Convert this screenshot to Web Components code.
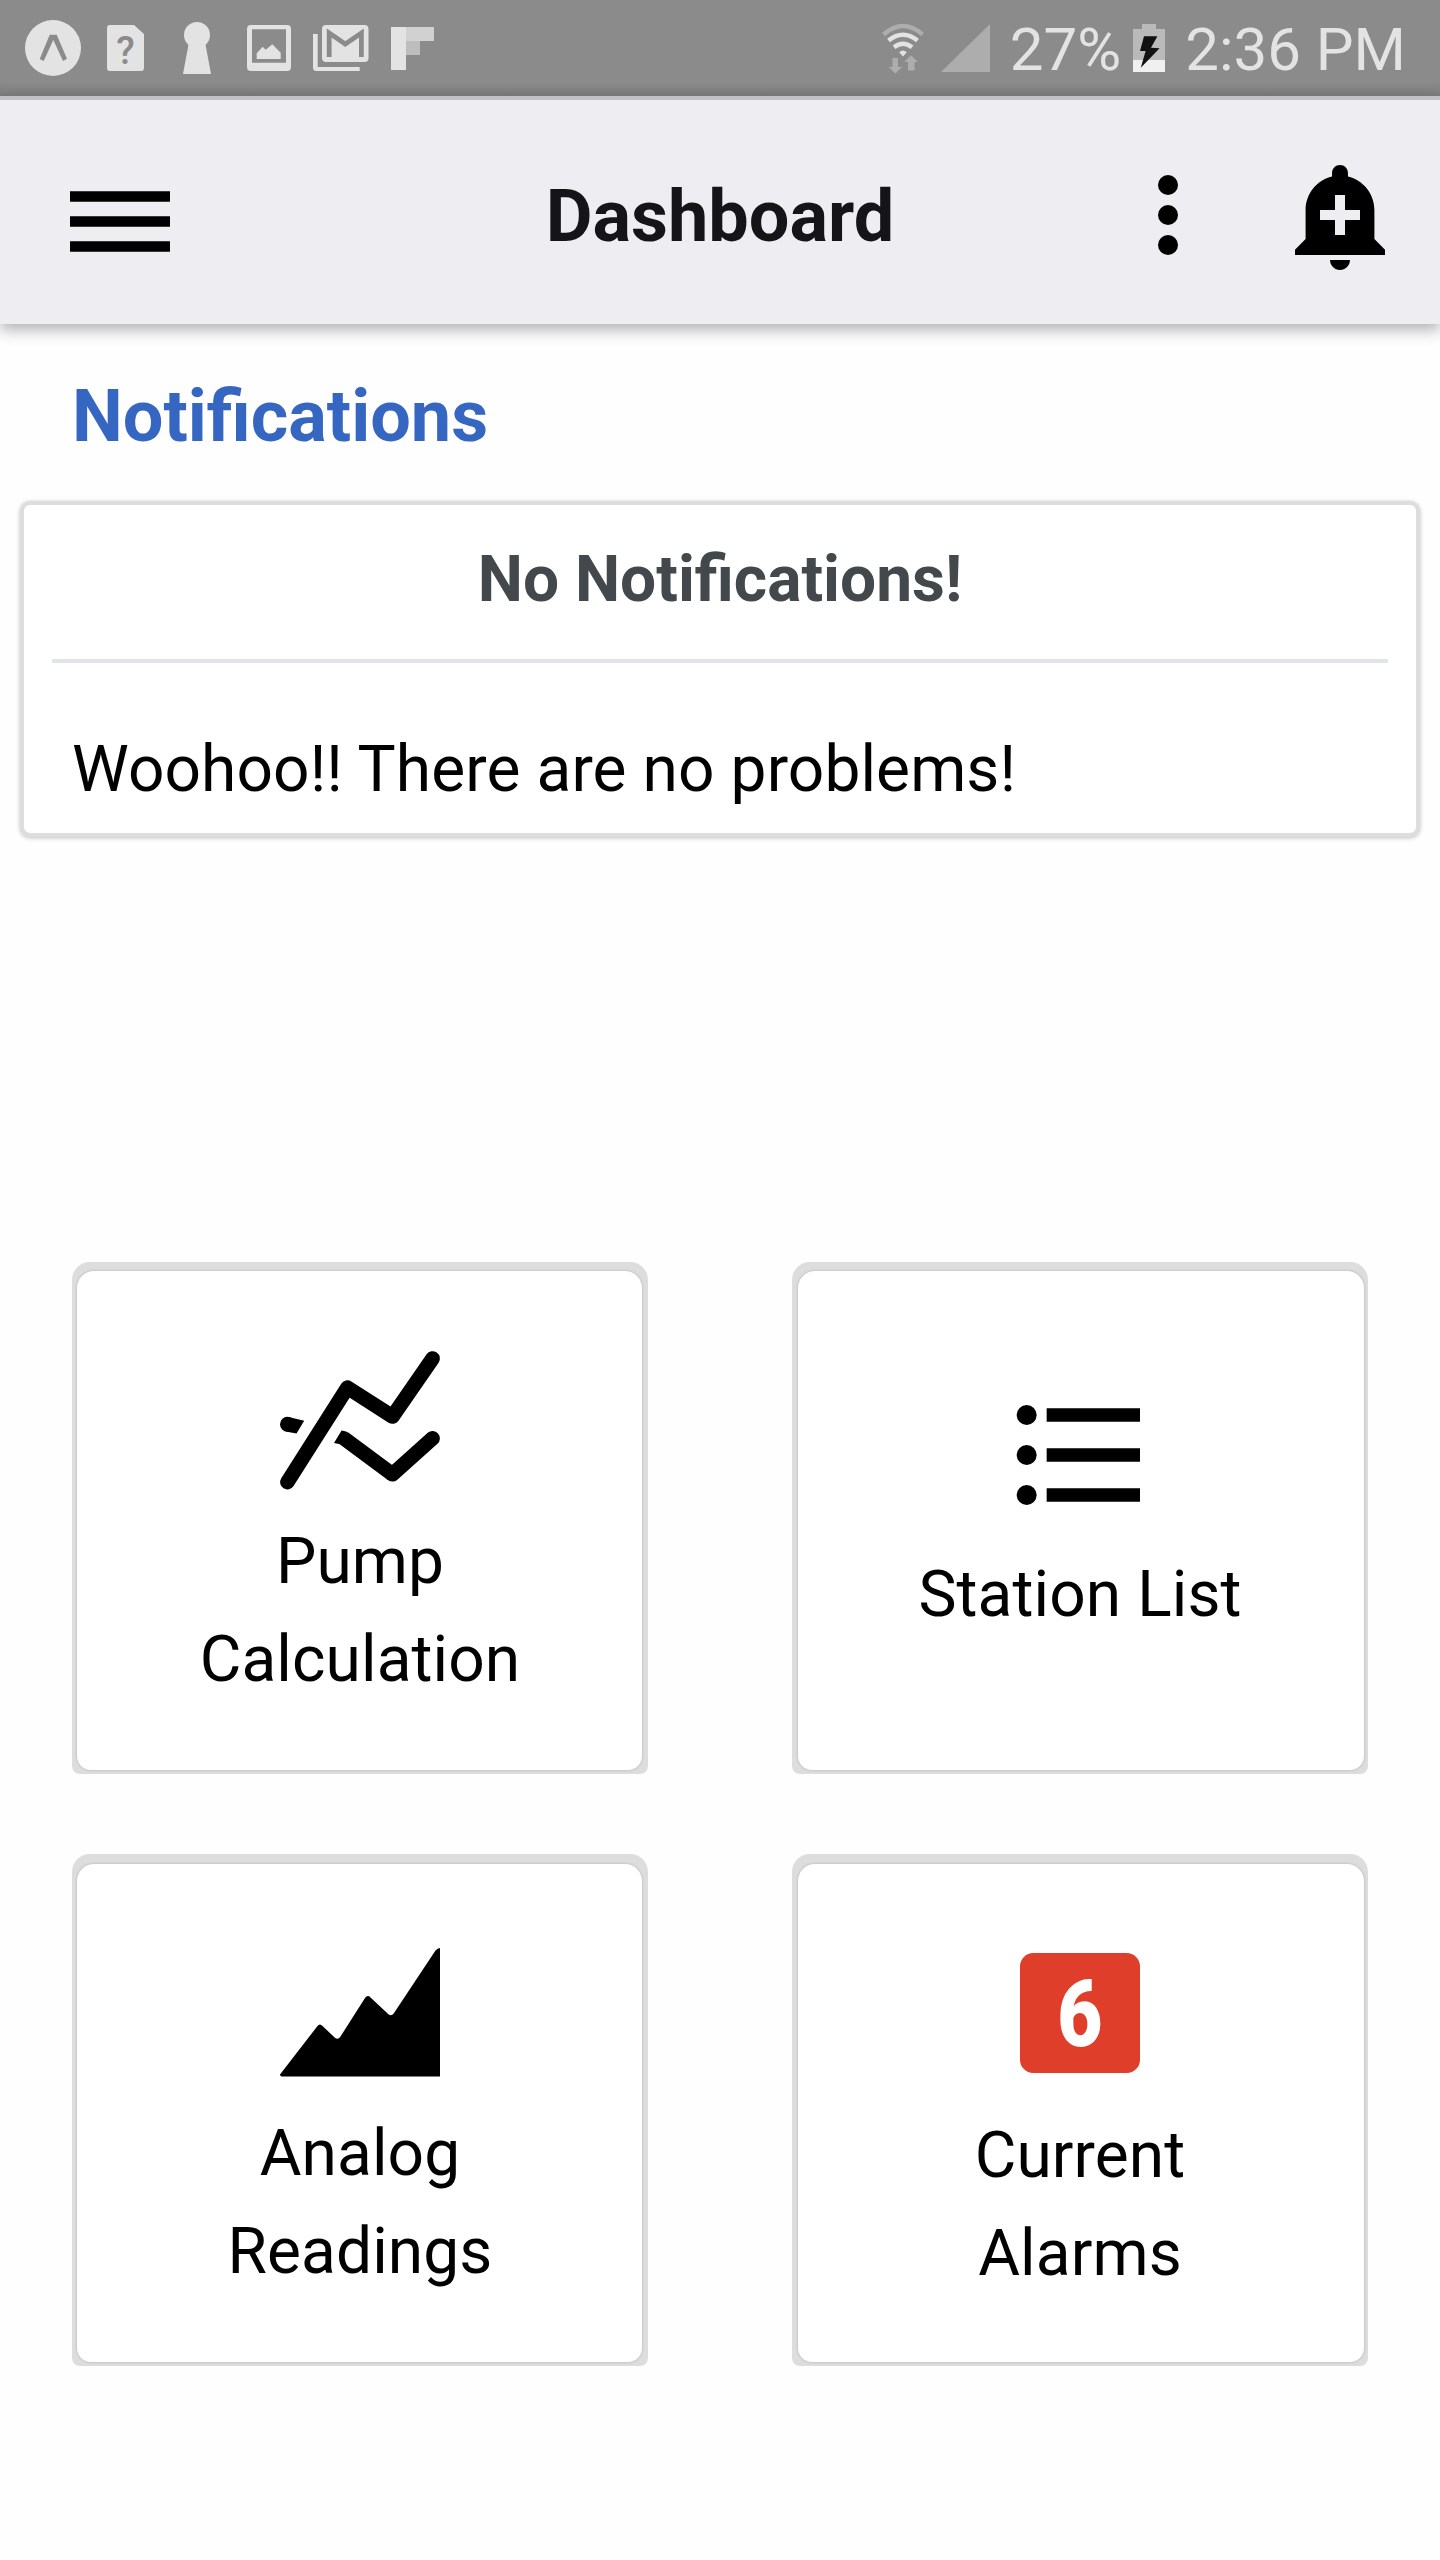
<!DOCTYPE html>
<html lang="en">
<head>
<meta charset="utf-8">
<title>Dashboard</title>
<style>
    body {
        margin: 0;
        background: #fefefe;
        font-family: Roboto, "Liberation Sans", sans-serif;
        color: #000;
    }
</style>
</head>
<body>
<dashboard-page></dashboard-page>

<script>
// Icon shapes: [width, height, viewBox, markup]
const ICONS = {
    expo: [56, 56, '0 0 56 56', `
        <circle cx="28" cy="28" r="28" fill="#e3e3e3"/>
        <path d="M14.7 39L24.7 14.7h7L42 38.7 38 41 28.3 20 18.7 41z" fill="#8b8b8c"/>`],
    sim: [37, 46, '0 0 37 46', `
        <path d="M3 0h24l10 9v34a3 3 0 0 1-3 3H3a3 3 0 0 1-3-3V3a3 3 0 0 1 3-3z" fill="#e3e3e3"/>
        <text x="18.5" y="39" text-anchor="middle" font-size="38" font-weight="500" fill="#8b8b8c">?</text>`],
    keyhole: [28, 52, '0 0 28 52', `
        <circle cx="14" cy="13" r="13" fill="#e3e3e3"/>
        <path d="M6 20h16l6 32H0z" fill="#e3e3e3"/>`],
    picture: [44, 46, '0 0 44 46', `
        <path fill-rule="evenodd" d="M4 0h36a4 4 0 0 1 4 4v38a4 4 0 0 1-4 4H4a4 4 0 0 1-4-4V4a4 4 0 0 1 4-4zM5 4.3v33.4h34V4.3z" fill="#e3e3e3"/>
        <path d="M9.7 28.3l6-6.6 3 3 6.6-5.4 8.4 8.4V34h-24z" fill="#e3e3e3"/>`],
    mail: [56, 46, '0 0 56 46', `
        <path d="M0 9h4.7v33h42v4H3.5A3.5 3.5 0 0 1 0 42.5z" fill="#e3e3e3"/>
        <rect x="9" y="0" width="46.5" height="37" rx="4" fill="#e3e3e3"/>
        <path d="M16.2 32V8l16.1 11L48.4 8v24" fill="none" stroke="#8b8b8c" stroke-width="4.8"/>`],
    flip: [43, 43, '0 0 43 43', `
        <path d="M0 0h15v43H0z" fill="#e3e3e3"/>
        <path d="M15 0h28v14H15z" fill="#d1d1d1"/>
        <path d="M15 14h14v14H15z" fill="#bdbdbd"/>`],
    wifi: [42, 50, '0 0 42 50', `
        <g fill="none" stroke-width="4.4">
            <path d="M1.5 11.5Q21-5.5 40.5 11.5" stroke="#adadae"/>
            <path d="M6.5 17.5Q21 6 35.5 17.5" stroke="#e3e3e3"/>
            <path d="M12 24.3Q21 17 30 24.3" stroke="#e3e3e3"/>
        </g>
        <path d="M17.2 29.3q3.8-3.6 7.6 0L21 33.5z" fill="#e3e3e3"/>
        <path d="M10.5 35h5.5v9h4l-6.7 6.5L6.7 44h3.8zM29 32.3l7 6.7h-3.5v8.500H26V39h-4z" fill="#adadae"/>`],
    signal: [49, 48, '0 0 49 48', `<path d="M49 0v48H0z" fill="#adadae"/>`],
    battery: [32, 48, '0 0 32 48', `
        <path d="M9 0h14v5h9v31H0V5h9z" fill="#bababa"/>
        <path d="M0 36h32v12H0z" fill="#f0f0f0"/>
        <path d="M11 12.3h13.4L18 23.7l8.6.6L7.8 43.7 12.6 27H7z" fill="#111"/>`],
    menu: [100, 61, '0 0 100 61', `<path d="M0 .2h100v10.600H0zM0 25.200h100v10.600H0zM0 50.200h100v10.600H0z"/>`],
    more: [120, 120, '0 0 24 24', `<circle cx="12" cy="6" r="2"/><circle cx="12" cy="12" r="2"/><circle cx="12" cy="18" r="2"/>`],
    alert: [120, 120, '0 0 24 24', `
        <path d="M10.01 21.01c0 1.1.89 1.99 1.99 1.99s1.99-.89 1.99-1.99h-3.98zm8.87-4.19V11c0-3.25-2.25-5.97-5.29-6.69v-.72C13.59 2.71 12.88 2 12 2s-1.59.71-1.59 1.59v.72C7.37 5.03 5.12 7.75 5.12 11v5.82L3 18.94V20h18v-1.06l-2.12-2.12zM16 13.01h-3v3h-2v-3H8V11h3V8h2v3h3v2.01z"/>`],
    multiline: [160, 139, '0 0 160 139', `
        <g fill="none" stroke="#000" stroke-width="14.6" stroke-linecap="round" stroke-linejoin="round">
            <path d="M7.4 131.2L67.4 36.6l45.1 28.9L152.6 7.5"/>
            <path d="M112.5 123.3l40.1-36"/>
        </g>
        <path d="M64 87.3l48.500 36" fill="none" stroke="#000" stroke-width="14.6"/>
        <circle cx="7.4" cy="73.2" r="7.4"/>
        <path d="M8.5 65.9l15.7 3.9-7.7 12.6-11-2zM61.6 79.6l4.5.8 3 1.8-5 11.8-10.1-2.1z"/>`],
    list: [160, 160, '0 0 24 24', `
        <circle cx="4" cy="6" r="1.5"/><circle cx="4" cy="12" r="1.5"/><circle cx="4" cy="18" r="1.5"/>
        <path d="M7 5h14v2H7zM7 11h14v2H7zM7 17h14v2H7z"/>`],
    area: [160, 129, '0 0 160 129', `
        <path d="M0 126.5L37.5 78Q39.8 75 42.5 78l12.7 12q2.8 1.8 5-1L85 50q2.6-3.6 5.5-.5l18.2 17q2.8 1.8 5-1L155.5 2.5Q157.5 0 160 0v128.500H2Q0 128.500 0 126.500z"/>`],
    six: [160, 160, '0 0 160 160', `
        <rect x="20" y="20" width="120" height="120" rx="13.3" fill="#df3e2b"/>
        <text transform="translate(80 113) scale(.84 1)" text-anchor="middle" font-size="93" font-weight="900" fill="#fff">6</text>`]
};

class AppIcon extends HTMLElement {
    constructor() {
        super();
        this.attachShadow({ mode: 'open' });
    }

    connectedCallback() {
        const [width, height, viewBox, markup] = ICONS[this.getAttribute('name')];
        this.shadowRoot.innerHTML = `
            <style>
                :host {
                    display: block;
                    flex: none;
                }
                svg {
                    display: block;
                    overflow: visible;
                }
            </style>
            <svg width="${width}" height="${height}" viewBox="${viewBox}">${markup}</svg>
        `;
    }
}

class StatusBar extends HTMLElement {
    constructor() {
        super();
        this.attachShadow({ mode: 'open' });
        this.shadowRoot.innerHTML = `
            <style>
                :host {
                    display: flex;
                    box-sizing: border-box;
                    align-items: center;
                    justify-content: space-between;
                    height: 96px;
                    padding: 0 34px 0 25px;
                    background: linear-gradient(#8b8b8c 82px, #7c7c7d);
                    color: #e3e3e3;
                    font-size: 60px;
                    line-height: 70px;
                    white-space: nowrap;
                }
                div {
                    display: flex;
                    align-items: center;
                }
            </style>
            <div>
                <app-icon name="expo"></app-icon>
                <app-icon name="sim" style="margin-left: 26px"></app-icon>
                <app-icon name="keyhole" style="margin-left: 39px"></app-icon>
                <app-icon name="picture" style="margin-left: 36px"></app-icon>
                <app-icon name="mail" style="margin-left: 22px"></app-icon>
                <app-icon name="flip" style="margin-left: 22px"></app-icon>
            </div>
            <div>
                <app-icon name="wifi"></app-icon>
                <app-icon name="signal" style="margin-left: 17px"></app-icon>
                <span style="margin: 4px 0 0 20px">27%</span>
                <app-icon name="battery" style="margin-left: 12px"></app-icon>
                <span style="margin: 4px 0 0 20px">2:36 PM</span>
            </div>
        `;
    }
}

class AppHeader extends HTMLElement {
    constructor() {
        super();
        this.attachShadow({ mode: 'open' });
        this.shadowRoot.innerHTML = `
            <style>
                :host {
                    display: grid;
                    box-sizing: border-box;
                    grid-template-columns: 1fr auto 1fr;
                    align-items: center;
                    height: 228px;
                    padding: 6px 40px 0 70px;
                    border-top: 4px solid #c1c0c5;
                    background: #eeedf2;
                    box-shadow: 0 6px 14px rgba(0, 0, 0, 0.3);
                }
                h1 {
                    margin: 4px 30px 0 0;
                    font-size: 72px;
                    font-weight: 700;
                    line-height: 84px;
                    color: #151517;
                }
                .menu {
                    margin-top: 13px;
                }
                .actions {
                    display: flex;
                    justify-content: flex-end;
                    gap: 52px;
                }
            </style>
            <app-icon class="menu" name="menu"></app-icon>
            <h1><slot></slot></h1>
            <div class="actions">
                <app-icon name="more"></app-icon>
                <app-icon name="alert"></app-icon>
            </div>
        `;
    }
}

class NoticeCard extends HTMLElement {
    constructor() {
        super();
        this.attachShadow({ mode: 'open' });
        this.shadowRoot.innerHTML = `
            <style>
                :host {
                    display: block;
                    box-sizing: border-box;
                    height: 336px;
                    margin: 0 20px;
                    padding: 0 28px;
                    border: 4px solid #ddd;
                    border-radius: 10px;
                    background: #fff;
                    box-shadow: 0 1px 4px rgba(0, 0, 0, 0.25);
                    font-size: 64px;
                    line-height: 76px;
                }
                h3 {
                    margin: 0;
                    padding: 37px 0 41px;
                    border-bottom: 4px solid #e1e5ea;
                    font-size: 64px;
                    font-weight: 700;
                    text-align: center;
                    color: #43484d;
                }
                p {
                    margin: 0;
                    padding: 69px 20px 0;
                    letter-spacing: 0.1px;
                }
            </style>
            <h3><slot name="title"></slot></h3>
            <p><slot></slot></p>
        `;
    }
}

class MenuTile extends HTMLElement {
    constructor() {
        super();
        this.attachShadow({ mode: 'open' });
        this.shadowRoot.innerHTML = `
            <style>
                :host {
                    display: block;
                    box-sizing: border-box;
                    height: 512px;
                    padding: var(--edge, 9px 6px 4px 5px);
                    border-radius: 18px 18px 8px 8px;
                    background: #ddd;
                }
                .face {
                    display: flex;
                    box-sizing: border-box;
                    flex-direction: column;
                    align-items: center;
                    height: 100%;
                    padding: var(--top) var(--right, 0) 0 var(--left, 0);
                    border-radius: 17px 17px 14px 14px;
                    background: #fff;
                    box-shadow: 0 0 3px rgba(0, 0, 0, 0.2);
                    font-size: 64px;
                    line-height: 98px;
                    letter-spacing: 0.1px;
                    text-align: center;
                }
                .label {
                    width: 340px;
                    margin-top: var(--gap);
                }
            </style>
            <div class="face">
                <app-icon name="${this.getAttribute('icon')}"></app-icon>
                <div class="label"><slot></slot></div>
            </div>
        `;
    }
}

class DashboardPage extends HTMLElement {
    constructor() {
        super();
        this.attachShadow({ mode: 'open' });
        this.shadowRoot.innerHTML = `
            <style>
                :host {
                    display: block;
                    height: 2560px;
                    overflow: hidden;
                }
                h2 {
                    margin: 0;
                    padding: 51px 72px 42px;
                    font-size: 72px;
                    font-weight: 700;
                    line-height: 84px;
                    letter-spacing: 0;
                    color: #3466c2;
                }
                .tiles {
                    display: grid;
                    grid-template-columns: 576px 576px;
                    justify-content: space-between;
                    row-gap: 80px;
                    padding: 425px 72px 0;
                }
            </style>
            <status-bar></status-bar>
            <app-header>Dashboard</app-header>
            <h2>Notifications</h2>
            <notice-card>
                <span slot="title">No Notifications!</span>
                Woohoo!! There are no problems!
            </notice-card>
            <div class="tiles">
                <menu-tile icon="multiline" style="--top: 80px; --gap: 23px; --left: 1px">Pump Calculation</menu-tile>
                <menu-tile icon="list" style="--top: 104px; --gap: 11px; --right: 2px; --edge: 9px 4px 4px 6px">Station List</menu-tile>
                <menu-tile icon="area" style="--top: 84px; --gap: 28px; --left: 1px; --edge: 10px 6px 4px 5px">Analog Readings</menu-tile>
                <menu-tile icon="six" style="--top: 69px; --gap: 14px; --right: 2px; --edge: 10px 4px 4px 6px">Current Alarms</menu-tile>
            </div>
        `;
    }
}

customElements.define('app-icon', AppIcon);
customElements.define('status-bar', StatusBar);
customElements.define('app-header', AppHeader);
customElements.define('notice-card', NoticeCard);
customElements.define('menu-tile', MenuTile);
customElements.define('dashboard-page', DashboardPage);
</script>
</body>
</html>
